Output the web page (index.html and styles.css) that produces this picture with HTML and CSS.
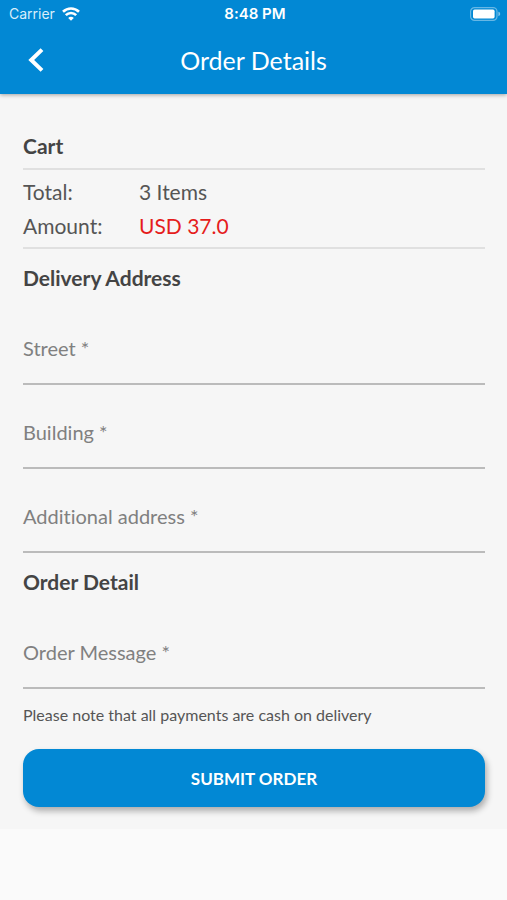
FILE: index.html
```html
<!DOCTYPE html>
<html lang="en">
<head>
<meta charset="utf-8">
<meta name="viewport" content="width=device-width, initial-scale=1">
<title>Order Details</title>
<link rel="stylesheet" href="styles.css">
</head>
<body>
<header class="header">
  <div class="status">
    <span class="carrier">Carrier
      <svg width="18" height="14" viewBox="0 0 18 14" fill="none" stroke="#fff" stroke-width="2.6" aria-hidden="true">
        <path d="M1 4.8C5.6.4 12.4.4 17 4.8"/>
        <path d="M3.8 8.2C6.8 5.2 11.2 5.2 14.2 8.2"/>
        <path d="M9 13.8 6.2 11C7.6 9.4 10.4 9.4 11.8 11Z" fill="#fff" stroke="none"/>
      </svg>
    </span>
    <time class="time">8:48 PM</time>
    <svg class="battery" width="32" height="14" viewBox="0 0 32 14" aria-hidden="true">
      <rect x="1.6" y="0.6" width="26.4" height="12.8" rx="4" fill="none" stroke="#fff" stroke-opacity=".4" stroke-width="1.2"/>
      <rect x="4" y="2.6" width="21.6" height="8.8" rx="1.6" fill="#fff"/>
      <path d="M29.4 4.8C31.8 5.4 31.8 8.6 29.4 9.2Z" fill="#fff" fill-opacity=".5"/>
    </svg>
  </div>
  <div class="bar">
    <button class="back" type="button" aria-label="Back">
      <svg width="16" height="24" viewBox="0 0 16 24" fill="none" stroke="#fff" stroke-width="4" aria-hidden="true">
        <path d="M14 1.6 3.2 12 14 22.4"/>
      </svg>
    </button>
    <h1 class="title">Order Details</h1>
  </div>
</header>
<main class="content">
  <h2 class="heading cart">Cart</h2>
  <dl class="summary">
    <dt>Total:</dt><dd>3 Items</dd>
    <dt>Amount:</dt><dd class="price">USD 37.0</dd>
  </dl>
  <form>
    <h2 class="heading">Delivery Address</h2>
    <div class="field"><label for="street">Street *</label><input id="street" type="text" required></div>
    <div class="field"><label for="building">Building *</label><input id="building" type="text" required></div>
    <div class="field"><label for="additional">Additional address *</label><input id="additional" type="text" required></div>
    <h2 class="heading">Order Detail</h2>
    <div class="field"><label for="message">Order Message *</label><input id="message" type="text" required></div>
    <p class="note">Please note that all payments are cash on delivery</p>
    <button class="submit" type="submit">SUBMIT ORDER</button>
  </form>
</main>
</body>
</html>
```

FILE: styles.css
```css
* {
  box-sizing: border-box;
}

body {
  margin: 0;
  background: #fafafa;
  color: #555;
  font-family: Lato, "Liberation Sans", sans-serif;
  font-size: 20px;
  font-variant-ligatures: none;
}

.header {
  position: relative;
  background: #0288d4;
  color: #fff;
  box-shadow: 0 1px 4px rgba(0, 0, 0, 0.35);
}

.status {
  display: grid;
  grid-template-columns: 1fr auto 1fr;
  align-items: center;
  height: 27px;
  padding: 0 6px 0 9px;
  font-family: Inter, sans-serif;
  font-size: 14px;
}

.carrier {
  display: flex;
  align-items: center;
  gap: 7px;
  color: #d9eefa;
}

.time {
  font-size: 15px;
  font-weight: 600;
}

.battery {
  justify-self: end;
}

.bar {
  display: grid;
  grid-template-columns: 71px 1fr 71px;
  align-items: center;
  height: 67px;
  padding-bottom: 2px;
}

.back {
  display: flex;
  align-items: center;
  justify-content: center;
  height: 48px;
  padding: 0;
  border: 0;
  background: none;
}

.title {
  margin: 0;
  font-size: 25px;
  font-weight: 400;
  text-align: center;
}

.content {
  padding: 33px 22px 22px 23px;
  background: #f6f6f6;
}

.heading {
  margin: 0;
  padding: 8px 0 12px;
  color: #444;
  font-size: 21px;
  font-weight: 700;
  line-height: 22px;
}

.cart {
  padding-bottom: 11px;
}

.summary {
  display: grid;
  grid-template-columns: 116px 1fr;
  margin: 0 0 10px;
  padding: 5px 0 4px;
  border: solid #e0e0e0;
  border-width: 2px 0;
  font-size: 21px;
  line-height: 34px;
}

.summary dd {
  margin: 0;
}

.summary .price {
  color: #e51c1c;
}

.field {
  display: grid;
  align-items: center;
  padding-top: 12px;
  border-bottom: 2px solid #bbb;
}

.field label,
.field input {
  grid-area: 1 / 1;
}

.field label {
  color: #808080;
}

.field input {
  width: 100%;
  height: 70px;
  padding: 0;
  border: 0;
  outline: 0;
  background: none;
  color: #444;
  font: inherit;
}

.field + .heading {
  padding-top: 18px;
}

.note {
  margin: 0 0 22px;
  padding-top: 14px;
  font-size: 16px;
  line-height: 24px;
}

.submit {
  display: block;
  width: 100%;
  height: 58px;
  border: 0;
  border-radius: 16px;
  background: #0288d4;
  box-shadow: 2px 4px 6px rgba(0, 0, 0, 0.3);
  color: #fff;
  font: 700 17px Lato, "Liberation Sans", sans-serif;
}
```
